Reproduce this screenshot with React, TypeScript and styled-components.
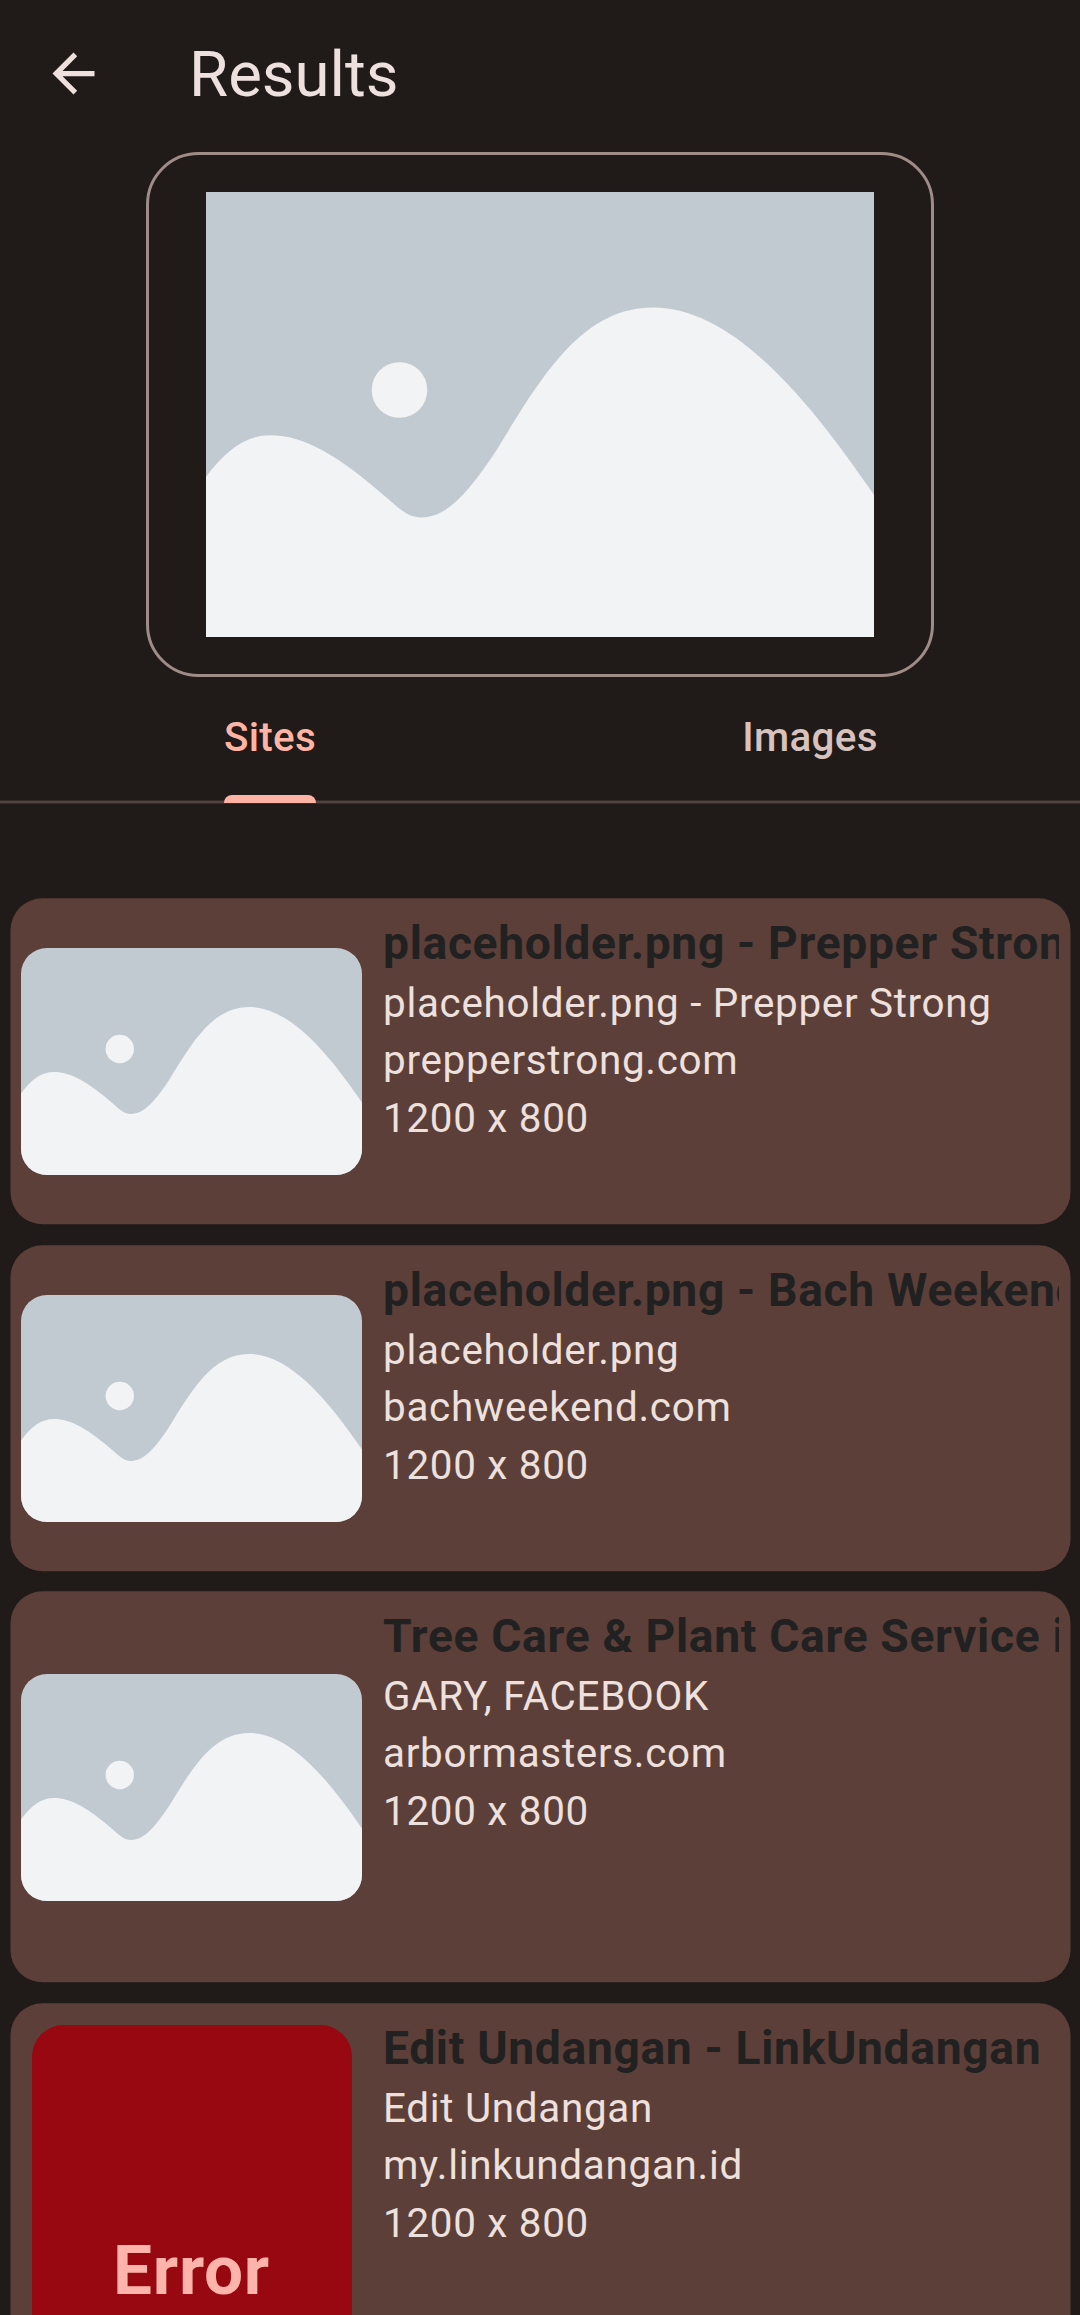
import React from "react";
import styled, { createGlobalStyle } from "styled-components";

const GlobalStyle = createGlobalStyle`
  * { box-sizing: border-box; }
  body { margin: 0; background: #201a18; }
`;

const Screen = styled.div`
  display: flex;
  flex-direction: column;
  width: 1080px;
  height: 2315px;
  overflow: hidden;
  background: #201a18;
  color: #ede0dd;
  font-family: Roboto, "Noto Sans", sans-serif;
`;

const TopBar = styled.header`
  display: flex;
  align-items: center;
  gap: 84px;
  flex: none;
  height: 152px;
  padding: 0 42px 5px;
`;

const BackButton = styled.button`
  display: flex;
  width: 63px;
  height: 63px;
  padding: 0;
  border: 0;
  background: none;
  color: inherit;
`;

const PageTitle = styled.h1`
  margin: 0;
  padding-top: 2px;
  font-size: 63.5px;
  font-weight: 400;
  line-height: 74px;
`;

const Preview = styled.section`
  display: flex;
  flex: none;
  align-self: center;
  align-items: center;
  justify-content: center;
  width: 788px;
  height: 525px;
  border: 3px solid #a08c87;
  border-radius: 52.5px;
`;

const Picture = styled.svg<{ $width: number; $height: number; $radius?: number }>`
  display: block;
  flex: none;
  width: ${(p) => p.$width}px;
  height: ${(p) => p.$height}px;
  border-radius: ${(p) => p.$radius ?? 0}px;
`;

const Tabs = styled.nav`
  display: grid;
  grid-template-columns: 1fr 1fr;
  flex: none;
  height: 127px;
  background: linear-gradient(#524340, #524340) 0 124px / 100% 2px no-repeat,
    linear-gradient(#352b29, #352b29) 0 123px / 100% 4px no-repeat;
`;

const Tab = styled.div<{ $active?: boolean }>`
  display: flex;
  flex-direction: column;
  align-items: center;
  justify-content: space-between;
  padding: 37px 0 1px;
  color: ${(p) => (p.$active ? "#ffb4a3" : "#d8c2bd")};
  font-size: 40.4px;
  font-weight: 500;
  line-height: 48px;
  letter-spacing: 0.3px;
`;

const Indicator = styled.span`
  width: 92px;
  height: 8px;
  border-radius: 8px 8px 0 0;
  background: #ffb4a3;
`;

const Results = styled.main`
  display: flex;
  flex-direction: column;
  padding: 95px 10.5px 0;
`;

const Card = styled.article<{ $height: number; $gap?: number }>`
  display: grid;
  grid-template-columns: 341px 1fr;
  column-gap: 21px;
  flex: none;
  height: ${(p) => p.$height}px;
  margin-bottom: ${(p) => p.$gap ?? 21}px;
  padding: 0 10.5px;
  border-radius: 31.5px;
  background: #5c3f38;
  box-shadow: 0 -0.25px 0 0.5px #5c3f38;
`;

const Thumb = styled.div`
  display: flex;
  align-items: center;
`;

const ErrorBox = styled.div`
  display: flex;
  align-items: center;
  justify-content: center;
  flex: 1;
  align-self: stretch;
  margin: 21px 10.5px;
  border-radius: 31.5px;
  background: #980810;
  color: #ffb4ab;
  font-size: 69.3px;
  font-weight: 700;
  letter-spacing: 0.72px;
`;

const Info = styled.div`
  display: flex;
  flex-direction: column;
  min-width: 0;
  padding-top: 14px;
`;

const Heading = styled.h2`
  flex: none;
  margin: 0 0 1.7px;
  overflow: hidden;
  color: #212121;
  font-size: 46.2px;
  font-weight: 700;
  line-height: 60px;
  letter-spacing: 0.66px;
  white-space: nowrap;
`;

const Line = styled.p`
  margin: 0;
  font-size: 40.4px;
  line-height: 57.5px;
  letter-spacing: 0.7px;
  white-space: nowrap;
`;

function Landscape(props: { width: number; height: number; radius?: number }) {
  return (
    <Picture
      $width={props.width}
      $height={props.height}
      $radius={props.radius}
      viewBox="0 0 668 445"
      preserveAspectRatio="none"
    >
      <rect width="668" height="445" fill="#c2cad1" />
      <path
        d="M0 285C20 258 40 243.2 64 243.2C98 243.2 132 263 181 306C195 318 202 325.4 215.5 325.4C242 325.4 264 298 290 259C335 186 375 115.6 447 115.6C520 115.6 592 191 668 303V445H0Z"
        fill="#f1f3f5"
      />
      <circle cx="193.5" cy="198" r="27.8" fill="#f1f3f5" />
    </Picture>
  );
}

interface Result {
  title: string;
  name: string;
  site: string;
  height: number;
  gap?: number;
  failed?: boolean;
}

const results: Result[] = [
  { title: "placeholder.png - Prepper Strong", name: "placeholder.png - Prepper Strong", site: "prepperstrong.com", height: 325, gap: 22 },
  { title: "placeholder.png - Bach Weekend", name: "placeholder.png", site: "bachweekend.com", height: 325 },
  { title: "Tree Care & Plant Care Service in", name: "GARY, FACEBOOK", site: "arbormasters.com", height: 390, gap: 22 },
  { title: "Edit Undangan - LinkUndangan", name: "Edit Undangan", site: "my.linkundangan.id", height: 532, failed: true },
];

export default function App() {
  return (
    <Screen>
      <GlobalStyle />
      <TopBar>
        <BackButton aria-label="Back">
          <svg width="63" height="63" viewBox="0 0 24 24" fill="currentColor">
            <path d="M20 11H7.83l5.59-5.59L12 4l-8 8 8 8 1.41-1.41L7.83 13H20v-2z" />
          </svg>
        </BackButton>
        <PageTitle>Results</PageTitle>
      </TopBar>
      <Preview>
        <Landscape width={668} height={445} />
      </Preview>
      <Tabs>
        <Tab $active>
          Sites
          <Indicator />
        </Tab>
        <Tab>Images</Tab>
      </Tabs>
      <Results>
        {results.map((r) => (
          <Card key={r.title} $height={r.height} $gap={r.gap}>
            <Thumb>
              {r.failed ? <ErrorBox>Error</ErrorBox> : <Landscape width={341} height={227} radius={26} />}
            </Thumb>
            <Info>
              <Heading>{r.title}</Heading>
              <Line>{r.name}</Line>
              <Line>{r.site}</Line>
              <Line>1200 x 800</Line>
            </Info>
          </Card>
        ))}
      </Results>
    </Screen>
  );
}
